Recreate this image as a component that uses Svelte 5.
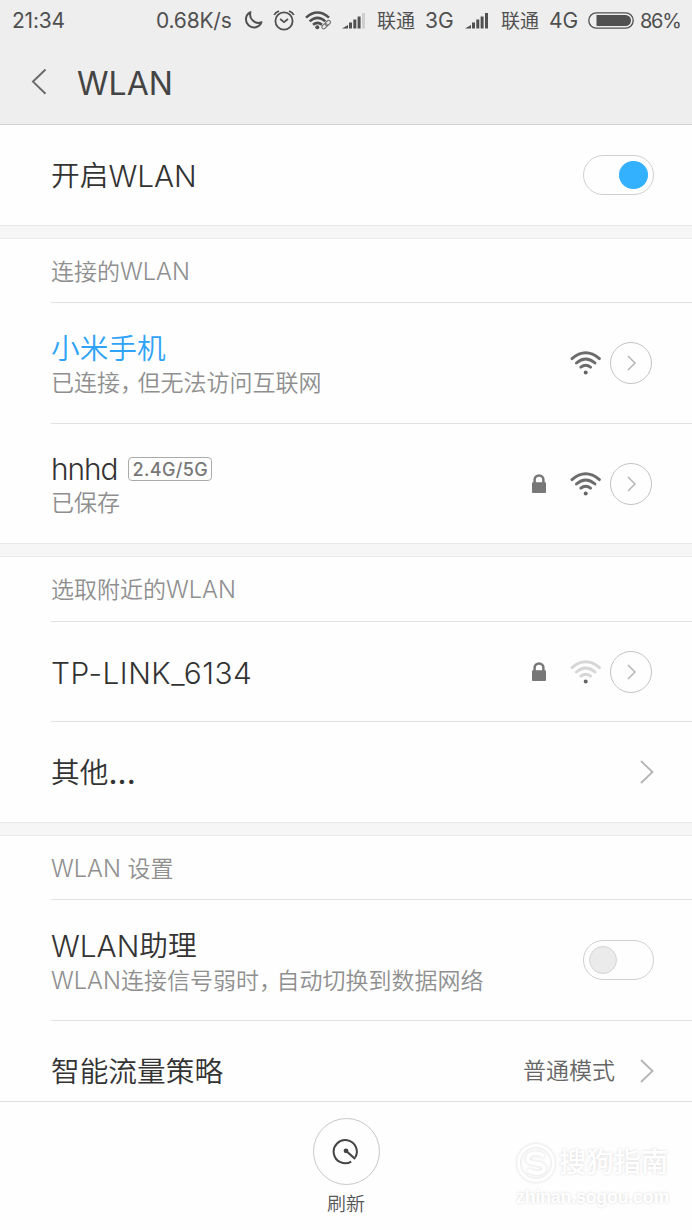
<script>
	let wlanOn = $state(true);
	let assistantOn = $state(false);

	const connected = [
		{ name: '小米手机', status: ['已连接', '但无法访问互联网'], active: true },
		{ name: 'hnhd', latin: true, badge: '2.4G/5G', status: ['已保存'], locked: true }
	];

	const nearby = [{ name: 'TP-LINK_6134', latin: true, locked: true, weak: true }];
</script>

{#snippet signal(last)}
	<svg width="24" height="16" viewBox="0 0 24 16" fill="#505050">
		<path d="M0 15.5 L6 12 V15.5 Z" />
		<rect x="7" y="9.5" width="3" height="6" />
		<rect x="11.3" y="6.5" width="3" height="9" />
		<rect x="15.6" y="3.5" width="3" height="12" />
		<rect x="20" y="0" width="3" height="15.5" fill={last} />
	</svg>
{/snippet}

{#snippet wifi(weak)}
	<svg class="wifi" width="32" height="24" viewBox="0 0 32 24" fill="none" stroke={weak ? '#d6d6d6' : '#6c6c6c'} stroke-width="2.9" stroke-linecap="round">
		<path d="M2 7.6 Q15.7 -4 29.4 7.6" />
		<path d="M6.4 12 Q15.7 4.2 25 12" />
		<path d="M10.8 16.1 Q15.7 12.4 20.6 16.1" />
		<circle cx="15.7" cy="21.4" r="2" fill="#666" stroke="none" />
	</svg>
{/snippet}

{#snippet arrow()}
	<svg class="arrow" width="14" height="24" viewBox="0 0 14 24" fill="none" stroke="#b4b4b4" stroke-width="1.8">
		<path d="M1 1 L12.5 12 L1 23" />
	</svg>
{/snippet}

{#snippet network(item)}
	<div class="row" class:tall={item.status} class:short={!item.status}>
		<div class="text">
			<div class="name" class:active={item.active}>
				<span class:en={item.latin} class:ssid={item.badge} class:wide={!item.status}>{item.name}</span>
				{#if item.badge}
					<span class="badge">{item.badge}</span>
				{/if}
			</div>
			{#if item.status}
				<div class="status">{item.status[0]}{#if item.status[1]}<span class="comma">，</span>{item.status[1]}{/if}</div>
			{/if}
		</div>
		{#if item.locked}
			<svg class="lock" width="14" height="19" viewBox="0 0 14 19">
				<path d="M2.6 9 V5.8 A4.4 4.4 0 0 1 11.4 5.8 V9" fill="none" stroke="#777" stroke-width="2.5" />
				<rect x="0" y="8.2" width="14" height="10.8" rx="1" fill="#777" />
			</svg>
		{/if}
		{@render wifi(item.weak)}
		<button class="detail" aria-label="详情">
			<svg width="9" height="16" viewBox="0 0 9 16" fill="none" stroke="#b4b4b4" stroke-width="1.5">
				<path d="M1 1 L8 8 L1 15" />
			</svg>
		</button>
	</div>
{/snippet}

<main>
	<header>
		<div class="statusbar">
			<span class="time">21:34</span>
			<span class="speed">0.68K/s</span>
			<svg class="up" width="19" height="18" viewBox="0 0 19 18" fill="none" stroke="#505050" stroke-width="2" stroke-linejoin="round">
				<path d="M6.4 1.2 A8 8 0 1 0 17.4 11.3 A8.4 8.4 0 0 1 6.4 1.2 Z" />
			</svg>
			<svg class="up" width="22" height="21" viewBox="0 0 22 21" fill="none" stroke="#505050" stroke-width="1.8">
				<circle cx="11" cy="11" r="8.6" />
				<path d="M1.2 5 Q2.4 2.2 6 1.2 M20.8 5 Q19.6 2.2 16 1.2" />
				<path d="M7.2 9 L11 12.2 L15 9" />
			</svg>
			<svg class="up" width="27" height="19" viewBox="0 0 27 19" fill="none" stroke="#505050" stroke-width="2.5">
				<path d="M1 6.6 Q12.5 -3.6 24 6.6" />
				<path d="M4.6 10.4 Q12.5 3.4 20.4 10.4" />
				<path d="M8 13.8 Q12.5 10 17 13.8" />
				<circle cx="12.3" cy="16.3" r="2" fill="#505050" stroke="none" />
				<g stroke="#707070" stroke-width="1.1">
					<rect x="-3" y="-1.8" width="6" height="3.6" rx="1.6" transform="translate(19.6 15.2) rotate(-45)" />
					<rect x="-3" y="-1.8" width="6" height="3.6" rx="1.6" transform="translate(22.8 12) rotate(-45)" />
				</g>
			</svg>
			{@render signal('#cfcfcf')}
			<span class="carrier">联通</span>
			<span>3G</span>
			{@render signal('#505050')}
			<span class="carrier">联通</span>
			<span>4G</span>
			<svg class="up" width="46" height="17" viewBox="0 0 46 17">
				<rect x="0.8" y="0.8" width="44.4" height="15.4" rx="7.7" fill="none" stroke="#505050" stroke-width="1.3" />
				<path d="M8.5 3 H37.5 A5.5 5.5 0 0 1 37.5 14 H8.5 Z" fill="#505050" />
			</svg>
			<span class="percent">86%</span>
		</div>
		<div class="titlebar">
			<svg width="16" height="26" viewBox="0 0 16 26" fill="none" stroke="#6a6a6a" stroke-width="2">
				<path d="M14.5 0.5 L2 12.6 L14.5 24.8" />
			</svg>
			<h1>WLAN</h1>
		</div>
	</header>

	<div class="list">
		<div class="row">
			<div class="text">
				<div class="name">开启<span class="en">WLAN</span></div>
			</div>
			<button class="switch" class:on={wlanOn} aria-label="WLAN" onclick={() => (wlanOn = !wlanOn)}><i></i></button>
		</div>

		<div class="band"></div>
		<h2>连接的<span class="en">WLAN</span></h2>
		{#each connected as item}
			{@render network(item)}
		{/each}

		<div class="band"></div>
		<h2 class="nearby">选取附近的<span class="en">WLAN</span></h2>
		{#each nearby as item}
			{@render network(item)}
		{/each}
		<div class="row other">
			<div class="text">
				<div class="name">其他<span class="en dots">...</span></div>
			</div>
			{@render arrow()}
		</div>

		<div class="band"></div>
		<h2><span class="en">WLAN</span> 设置</h2>
		<div class="row tall">
			<div class="text">
				<div class="name"><span class="en">WLAN</span>助理</div>
				<div class="status"><span class="en">WLAN</span>连接信号弱时<span class="comma">，</span>自动切换到数据网络</div>
			</div>
			<button class="switch" class:on={assistantOn} aria-label="WLAN助理" onclick={() => (assistantOn = !assistantOn)}><i></i></button>
		</div>
		<div class="row">
			<div class="text">
				<div class="name">智能流量策略</div>
			</div>
			<span class="value">普通模式</span>
			{@render arrow()}
		</div>
	</div>

	<footer>
		<button class="refresh" aria-label="刷新">
			<svg width="28" height="28" viewBox="0 0 28 28" fill="none" stroke="#444" stroke-width="2">
				<path d="M19.2 23.6 A11.6 11.6 0 1 1 23.2 19.6" />
				<path d="M14 12.8 L23.2 21" stroke-width="2.2" />
				<circle cx="14" cy="12.8" r="2.4" fill="#444" stroke="none" />
			</svg>
		</button>
		<span>刷新</span>
		<div class="watermark">
			<div class="brand">
				<svg width="40" height="40" viewBox="0 0 40 40" fill="none" stroke="#fff">
					<circle cx="20" cy="20" r="17.5" stroke-width="3" />
					<path d="M28 13 Q20 8 13.5 12 Q9 17 15 19.5 L25 21.5 Q31 25 26 29 Q19 32 12 27" stroke-width="4" />
				</svg>
				<b>搜狗指南</b>
			</div>
			<div class="site">zhinan.sogou.com</div>
		</div>
	</footer>
</main>

<style>
	:global(body) {
		margin: 0;
		background: #fff;
	}

	main {
		display: flex;
		flex-direction: column;
		width: 692px;
		height: 1230px;
		overflow: hidden;
		background: #fefefe;
		color: #333;
		font-family: Inter, "Noto Sans CJK SC", sans-serif;
		font-weight: 350;
	}

	button {
		padding: 0;
		background: none;
	}

	svg {
		display: block;
		flex: none;
	}

	header {
		box-sizing: border-box;
		flex: none;
		height: 125px;
		background: #eee;
		border-bottom: 1px solid #d2d2d2;
	}

	.statusbar {
		display: grid;
		grid-template-columns: 144px 88px 29px 32px 37px 35px 48px 40px 36px 48px 39px 52px 44px;
		align-items: center;
		height: 40px;
		padding-left: 12px;
		color: #505050;
		font-size: 21px;
		font-weight: 400;
		line-height: 40px;
		white-space: nowrap;
	}

	.time,
	.speed {
		letter-spacing: -0.2px;
	}

	.carrier {
		padding-top: 2px;
		font-size: 19px;
	}

	.up {
		margin-bottom: 2px;
	}

	.percent {
		font-size: 20px;
		letter-spacing: -1.3px;
	}

	.titlebar {
		display: flex;
		align-items: center;
		gap: 30px;
		height: 84px;
		padding-left: 31px;
	}

	h1 {
		margin: 0;
		padding-top: 2px;
		color: #444;
		font-size: 32px;
		font-weight: 400;
	}

	.list {
		flex: 1;
		min-height: 0;
		overflow: hidden;
	}

	.band {
		box-sizing: border-box;
		height: 14px;
		background: #f6f6f6;
		border-top: 1px solid #e8e8e8;
		border-bottom: 1px solid #eaeaea;
	}

	h2 {
		box-sizing: border-box;
		height: 64px;
		margin: 0 0 0 51px;
		border-bottom: 1px solid #e2e2e2;
		color: #8f8f8f;
		font-size: 23px;
		font-weight: 350;
		line-height: 65px;
	}

	h2 .en,
	.status .en {
		font-size: 23.6px;
		font-weight: 300;
	}

	h2.nearby {
		height: 65px;
	}

	.row {
		box-sizing: border-box;
		display: flex;
		align-items: center;
		height: 100px;
		margin-left: 51px;
		padding-right: 38px;
	}

	.row.tall {
		height: 120px;
	}

	.row.short {
		height: 99px;
	}

	.row.other {
		height: 101px;
	}

	.row + .row {
		border-top: 1px solid #e2e2e2;
	}

	.text {
		flex: 1;
		padding-top: 2px;
	}

	.tall .text {
		padding-top: 4px;
	}

	.name {
		display: flex;
		align-items: center;
		height: 36px;
		font-size: 28.7px;
		line-height: 36px;
		white-space: nowrap;
	}

	.name .en {
		font-size: 29.8px;
	}

	.name .ssid {
		letter-spacing: -1px;
	}

	.name .wide {
		letter-spacing: 0.55px;
	}

	.name .dots {
		font-weight: 500;
		letter-spacing: 0.2px;
	}

	.name.active {
		color: #2ea3f8;
	}

	.badge {
		box-sizing: border-box;
		height: 24px;
		margin-left: 10px;
		padding: 0 3px 0 4px;
		border: 1.5px solid #aaa;
		border-radius: 4px;
		color: #777;
		font-size: 18px;
		font-weight: 500;
		letter-spacing: 0.35px;
		line-height: 23px;
	}

	.status {
		height: 33px;
		color: #8f8f8f;
		font-size: 23px;
		line-height: 33px;
		white-space: nowrap;
	}

	.comma {
		letter-spacing: -5.5px;
	}

	.lock {
		margin-right: 24px;
	}

	.wifi {
		margin-right: 8px;
	}

	.detail {
		box-sizing: border-box;
		display: flex;
		align-items: center;
		justify-content: center;
		width: 42px;
		height: 42px;
		margin-right: 2px;
		border: 1px solid #c4c4c4;
		border-radius: 50%;
	}

	.switch {
		box-sizing: border-box;
		display: flex;
		align-items: center;
		width: 71px;
		height: 40px;
		padding: 0 5px;
		border: 1px solid #d0d0d0;
		border-radius: 20px;
	}

	.switch i {
		box-sizing: border-box;
		width: 28px;
		height: 28px;
		border: 1px solid #d4d4d4;
		border-radius: 50%;
		background: #ebebeb;
	}

	.switch.on {
		justify-content: flex-end;
	}

	.switch.on i {
		width: 29px;
		border-color: #33b1ff;
		background: #33b1ff;
	}

	.value {
		margin-right: 25px;
		padding-bottom: 3px;
		color: #666;
		font-size: 23px;
	}

	footer {
		position: relative;
		box-sizing: border-box;
		display: flex;
		flex: none;
		flex-direction: column;
		align-items: center;
		height: 129px;
		padding-top: 16px;
		border-top: 1px solid #dedede;
		color: #555;
		font-size: 19px;
		line-height: 40px;
	}

	.refresh {
		box-sizing: border-box;
		display: flex;
		align-items: center;
		justify-content: center;
		width: 67px;
		height: 67px;
		border: 1px solid #c8c8c8;
		border-radius: 50%;
	}

	.watermark {
		position: absolute;
		right: 23px;
		bottom: 20px;
		color: #fff;
		font-weight: 700;
		text-shadow: 0 0 3px rgba(0, 0, 0, 0.16);
	}

	.brand {
		display: flex;
		align-items: center;
		gap: 3px;
		height: 42px;
		font-size: 27.3px;
	}

	.brand b {
		font-weight: 500;
	}

	.brand svg {
		filter: drop-shadow(0 0 1.5px rgba(0, 0, 0, 0.16));
	}

	.site {
		font-family: "Liberation Sans", sans-serif;
		font-size: 17.8px;
		letter-spacing: -0.2px;
		line-height: 26px;
	}
</style>
